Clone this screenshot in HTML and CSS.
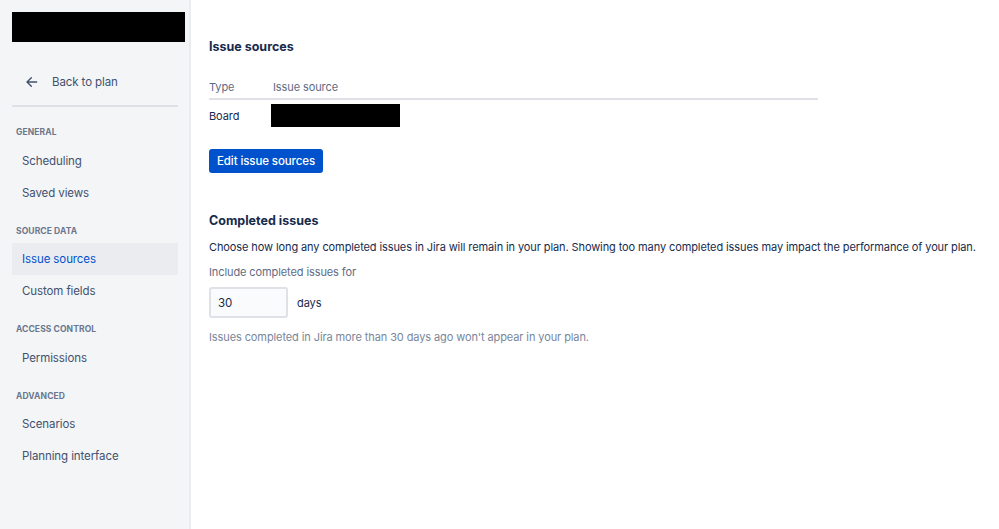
FILE: index.html
```html
<!DOCTYPE html>
<html lang="en">
<head>
    <meta charset="UTF-8" />
    <meta name="viewport" content="width=device-width, initial-scale=1.0" />
    <title>Plan settings</title>
    <link rel="stylesheet" href="styles.css">
</head>
<body>

<div class="layout">
    <nav class="sidebar">
        <div class="plan-name">
            <div class="redacted"></div>
        </div>

        <a class="back-link" href="#">
            <svg width="16" height="16" viewBox="0 0 24 24" fill="none">
                <path d="M11 5.5 4.5 12l6.5 6.5M5 12h14" stroke="#42526e" stroke-width="2" stroke-linecap="round" stroke-linejoin="round"/>
            </svg>
            <span>Back to plan</span>
        </a>
        <div class="divider"></div>

        <div class="nav-group">General</div>
        <a class="nav-item" href="#">Scheduling</a>
        <a class="nav-item" href="#">Saved views</a>

        <div class="nav-group">Source data</div>
        <a class="nav-item active" href="#">Issue sources</a>
        <a class="nav-item" href="#">Custom fields</a>

        <div class="nav-group">Access control</div>
        <a class="nav-item" href="#">Permissions</a>

        <div class="nav-group">Advanced</div>
        <a class="nav-item" href="#">Scenarios</a>
        <a class="nav-item" href="#">Planning interface</a>
    </nav>

    <main class="content">
        <h2 class="heading">Issue sources</h2>

        <table class="sources">
            <thead>
                <tr><th class="col-type">Type</th><th>Issue source</th></tr>
            </thead>
            <tbody>
                <tr><td>Board</td><td><div class="redacted-cell"></div></td></tr>
            </tbody>
        </table>

        <button class="btn">Edit issue sources</button>

        <h2 class="heading completed">Completed issues</h2>
        <p class="desc">Choose how long any completed issues in Jira will remain in your plan. Showing too many completed issues may impact the performance of your plan.</p>
        <label class="field-label" for="days">Include completed issues for</label>
        <div class="days-row">
            <input class="days-input" id="days" type="text" value="30">
            <span>days</span>
        </div>
        <p class="help">Issues completed in Jira more than 30 days ago won't appear in your plan.</p>
    </main>
</div>

</body>
</html>
```

FILE: styles.css
```css
body {
    margin: 0;
    padding: 0;
    font-family: Inter, "Noto Sans", sans-serif;
    font-size: 11px;
    letter-spacing: -0.1px;
    color: #172b4d;
    background-color: #ffffff;
}

.layout {
    display: flex;
    height: 529px;
}

.sidebar {
    width: 191px;
    background-color: #f4f5f7;
    border-right: 2px solid #ebecf0;
    padding: 12px 12px 0 12px;
    box-sizing: border-box;
    display: flex;
    flex-direction: column;
    flex-shrink: 0;
}

.plan-name {
    height: 30px;
}

.redacted {
    width: 173px;
    height: 30px;
    background-color: #000;
}

.back-link {
    display: flex;
    align-items: center;
    gap: 12px;
    margin-top: 30px;
    padding-left: 12px;
    height: 20px;
    color: #42526e;
    text-decoration: none;
    font-size: 11.5px;
}

.divider {
    height: 2px;
    background-color: #dfe1e6;
    margin-top: 13px;
    width: 166px;
}

.nav-group {
    text-transform: uppercase;
    font-size: 8.5px;
    font-weight: 700;
    color: #6b778c;
    letter-spacing: 0.1px;
    padding-left: 4px;
    margin-top: 19px;
    margin-bottom: 6.5px;
    line-height: 12px;
}

.nav-item {
    display: block;
    width: 166px;
    box-sizing: border-box;
    height: 32px;
    line-height: 32px;
    padding-left: 10px;
    color: #42526e;
    text-decoration: none;
    font-size: 11.5px;
}

.nav-item + .nav-group {
    margin-top: 16px;
}

.nav-item.active {
    background-color: #ebecf0;
    color: #0052cc;
}

.content {
    flex: 1;
    padding: 38px 0 0 18px;
}

.heading {
    font-size: 12.5px;
    font-weight: 700;
    margin: 0;
    line-height: 18px;
    letter-spacing: 0;
}

.sources {
    border-collapse: collapse;
    width: 609px;
    margin-top: 23px;
}

.sources th {
    text-align: left;
    font-weight: 400;
    color: #5e6c84;
    padding: 0 0 3px 0;
    line-height: 16px;
    border-bottom: 2px solid #dfe1e6;
}

.sources .col-type {
    width: 64px;
}

.sources td {
    padding: 4px 0 0 0;
    height: 23px;
    vertical-align: middle;
}

.redacted-cell {
    width: 129px;
    height: 23px;
    margin-left: -2px;
    background-color: #000;
}

.btn {
    display: block;
    margin-top: 22px;
    height: 24px;
    padding: 0 8px;
    background-color: #0052cc;
    color: #fff;
    border: none;
    border-radius: 3px;
    font-family: inherit;
    font-size: 11.5px;
    letter-spacing: -0.1px;
    font-weight: 500;
}

.heading.completed {
    margin-top: 39px;
    font-size: 12.5px;
}

.desc {
    margin: 9px 0 0 0;
    line-height: 16px;
}

.field-label {
    display: block;
    color: #5e6c84;
    margin-top: 9px;
    line-height: 16px;
}

.days-row {
    display: flex;
    align-items: center;
    gap: 9px;
    margin-top: 7px;
}

.days-input {
    width: 79px;
    height: 31px;
    box-sizing: border-box;
    border: 2px solid #dfe1e6;
    border-radius: 3px;
    background-color: #fafbfc;
    padding: 0 7px;
    font-family: inherit;
    font-size: 11.5px;
    color: #172b4d;
}

.help {
    margin: 11px 0 0 0;
    color: #7a869a;
    line-height: 16px;
}
```
